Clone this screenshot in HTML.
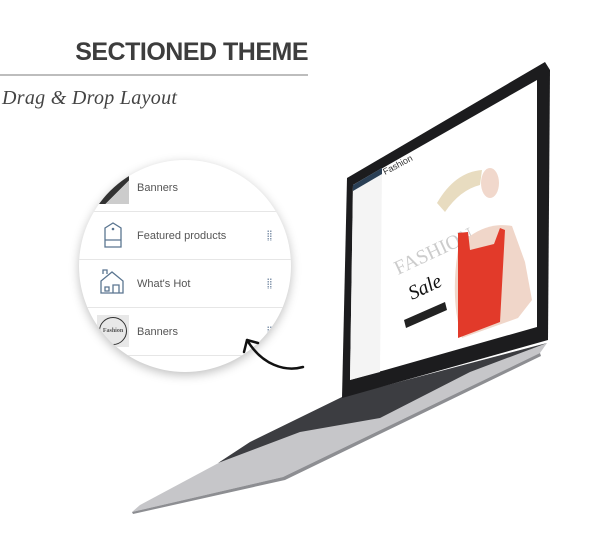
<!DOCTYPE html>
<html><head><meta charset="utf-8"><style>
html,body{margin:0;padding:0;background:#fff;width:616px;height:537px;overflow:hidden;position:relative;font-family:"Liberation Sans",sans-serif}
.t{position:absolute;left:0;top:38px;width:308px;text-align:right;font-weight:bold;font-size:25px;color:#3d3d3d;letter-spacing:-0.5px}
.hr{position:absolute;left:0;top:74px;width:308px;height:2px;background:#bdbdbd}
.s{position:absolute;left:2px;top:87px;font-family:"Liberation Serif",serif;font-style:italic;font-size:20px;color:#444;letter-spacing:0.3px}
.c{position:absolute;left:79px;top:160px;width:212px;height:212px;border-radius:50%;background:#fff;overflow:hidden;box-shadow:0 3px 10px rgba(0,0,0,0.25)}
.row{position:absolute;left:0;width:212px;height:47px;border-bottom:1px solid #e6e6e6;font-size:11px;color:#555}
.row span{position:absolute;left:58px;top:50%;transform:translateY(-50%)}
.h{position:absolute;left:188px;top:18px;width:5px;height:11px;background:radial-gradient(circle,#8a9bb0 0.8px,transparent 1px) 0 0/2.5px 2.5px}
</style></head><body>
<div class="t">SECTIONED THEME</div>
<div class="hr"></div>
<div class="s">Drag &amp; Drop Layout</div>
<div class="c">
 <div class="row" style="top:4px;height:47px"><div style="position:absolute;left:20px;top:10px;width:30px;height:30px;background:linear-gradient(135deg,#fff 40%,#333 41%,#333 60%,#ccc 61%)"></div><span>Banners</span></div>
 <div class="row" style="top:52px"><svg style="position:absolute;left:24px;top:10px" width="20" height="27"><path d="M2 6 L10 1 L18 6 V25 H2 Z M2 18 H18" fill="none" stroke="#5a7590" stroke-width="1.3"/><circle cx="10" cy="7" r="1.3" fill="#5a7590"/></svg><span>Featured products</span><div class="h"></div></div>
 <div class="row" style="top:100px"><svg style="position:absolute;left:20px;top:9px" width="26" height="26"><path d="M2 24 V12 L13 3 L24 12 V24 Z M4 5 V1 H8 V5 M14 24 V16 H20 V24 M6 18 h4 v4 h-4 z" fill="none" stroke="#5a7590" stroke-width="1.3"/></svg><span>What's Hot</span><div class="h"></div></div>
 <div class="row" style="top:148px"><div style="position:absolute;left:18px;top:7px;width:32px;height:32px;background:#e8e8e8"><div style="margin:2px;width:26px;height:26px;border:1px solid #333;border-radius:50%;font:bold 6px 'Liberation Serif',serif;text-align:center;line-height:26px">Fashion</div></div><span>Banners</span><div class="h"></div></div>
</div>
<svg style="position:absolute;left:0;top:0" width="616" height="537">
 <path d="M303 367 C285 372 262 365 247 340 M247 340 L244 352 M247 340 L258 343" fill="none" stroke="#111" stroke-width="2.5" stroke-linecap="round"/>
 <!-- base -->
 <polygon points="342,397 547,343 540,353 283,477 132,512 140,505" fill="#c6c6c9"/>
 <polygon points="342,397 547,343 470,372 380,418 300,432 218,463 250,442" fill="#3c3d41"/>
 <polygon points="132,512 283,477 540,353 541,356 285,480 133,514" fill="#8d8e92"/>
 <!-- lid -->
 <polygon points="347,178 545,62 550,70 548,340 342,398" fill="#1c1c1e"/>
 <polygon points="353,185 537,80 537,327 350,380" fill="#fff"/>
 <polygon points="353,185 382,168 380,372 350,380" fill="#f4f4f4"/>
 <polygon points="353,185 382,168 382,174 353,191" fill="#2a3f55"/>
 <text x="0" y="0" transform="translate(385,175) rotate(-28)" font-size="9" fill="#333" font-family="Liberation Sans">Fashion</text>
 <text x="0" y="0" transform="translate(398,275) rotate(-25)" font-size="20" fill="#ccc" font-family="Liberation Serif">FASHION</text>
 <text x="0" y="0" transform="translate(412,300) rotate(-25)" font-size="20" font-style="italic" fill="#111" font-family="Liberation Serif">Sale</text>
 <polygon points="404,320 445,302 447,310 406,328" fill="#222"/>
 <path d="M437 203 Q455 172 482 170 L480 185 Q460 190 445 212 Z" fill="#e8dcc0"/>
 <ellipse cx="490" cy="183" rx="9" ry="15" fill="#f1d8cc"/>
 <path d="M470 236 Q490 222 512 226 L525 262 L532 300 L518 318 L462 338 Q450 300 458 250 Z" fill="#f0d6c9"/>
 <polygon points="458,233 468,232 470,250 494,244 500,228 505,230 500,322 458,338" fill="#e23a2a"/>
</svg>
</body></html>
